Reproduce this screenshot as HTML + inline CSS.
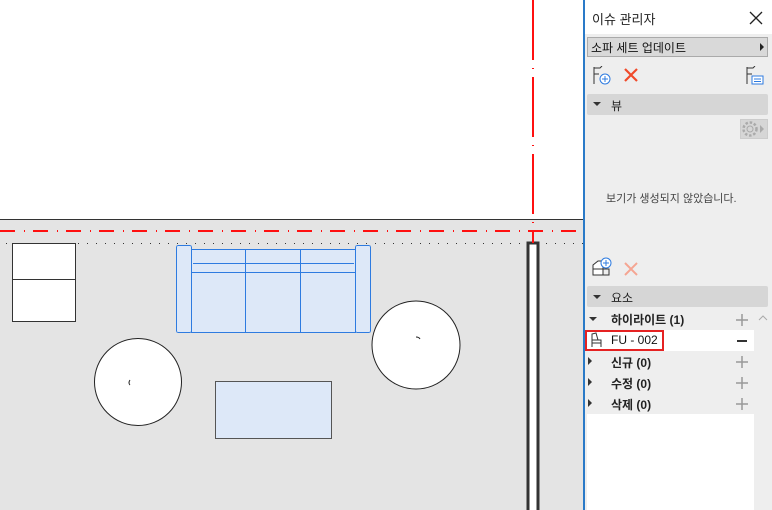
<!DOCTYPE html>
<html><head><meta charset="utf-8"><style>
*{margin:0;padding:0;box-sizing:border-box}
body{width:772px;height:510px;overflow:hidden;position:relative;background:#fff;font-family:"Liberation Sans","Noto Sans CJK KR",sans-serif;font-size:12px;color:#222}
.a{position:absolute}
.t{position:absolute;white-space:nowrap}
</style></head><body>
<svg class="a" style="left:0;top:0" width="584" height="510" shape-rendering="crispEdges">
<rect x="0" y="219" width="584" height="291" fill="#e4e4e4"/>
<line x1="0" y1="219.5" x2="584" y2="219.5" stroke="#333" stroke-width="1"/>
<line x1="6" y1="243.5" x2="584" y2="243.5" stroke="#333" stroke-width="1" stroke-dasharray="1,8"/>
<rect x="528" y="243" width="10" height="270" fill="#fff" stroke="#333" stroke-width="3"/>
<rect x="12.5" y="243.5" width="63" height="78" fill="#fff" stroke="#333"/>
<line x1="12" y1="279.5" x2="76" y2="279.5" stroke="#333"/>
<g stroke="#2e7be0" fill="#dde8f8" stroke-width="1">
<rect x="176.5" y="245.5" width="15" height="87" rx="2"/>
<rect x="355.5" y="245.5" width="15" height="87" rx="2"/>
<rect x="191.5" y="249.5" width="164" height="83"/>
<line x1="191" y1="272.5" x2="356" y2="272.5"/>
<line x1="193" y1="263.5" x2="354" y2="263.5"/>
<line x1="245.5" y1="249" x2="245.5" y2="333"/>
<line x1="300.5" y1="249" x2="300.5" y2="333"/>
<rect x="215.5" y="381.5" width="116" height="57" stroke="#555"/>
</g>
</svg>
<div class="a" style="left:0;top:230px;width:583px;height:2px;background:repeating-linear-gradient(90deg,#ff1010 0 15px,transparent 15px 24px,#ff1010 24px 25px,transparent 25px 33px)"></div>
<div class="a" style="left:532px;top:0;width:2px;height:243px;background:repeating-linear-gradient(180deg,#ff1010 0 60px,transparent 60px 68px,#ff1010 68px 69px,transparent 69px 77px)"></div>
<svg class="a" style="left:0;top:0" width="584" height="510">
<circle cx="138" cy="382" r="43.5" fill="#fff" stroke="#222"/>
<circle cx="416" cy="345" r="44" fill="#fff" stroke="#222"/>
<path d="M130 380 q-2 3 0 5" stroke="#222" fill="none"/>
<path d="M416 337 q3 0 4 2" stroke="#222" fill="none"/>
</svg>
<div class="a" style="left:583px;top:0;width:189px;height:510px;background:#eee;border-left:2px solid #2a7ac8"></div>
<div class="a" style="left:585px;top:0;width:187px;height:34px;background:#fff"></div>
<div class="t" style="left:592px;top:9px;font-size:13px">이슈 관리자</div>
<svg class="a" style="left:749px;top:11px" width="14" height="14"><path d="M1 1L13 13M13 1L1 13" stroke="#222" stroke-width="1.3"/></svg>
<div class="a" style="left:587px;top:37px;width:181px;height:20px;background:#d9d9d9;border:1px solid #aaa"></div>
<div class="t" style="left:591px;top:39px;font-size:12px;color:#111">소파 세트 업데이트</div>
<div class="a" style="left:760px;top:43px;border-left:4px solid #222;border-top:4px solid transparent;border-bottom:4px solid transparent"></div>
<svg class="a" style="left:592px;top:66px" width="20" height="20"><path d="M2 1V18M2 2H8L10 0M2 8H7" stroke="#333" fill="none"/><circle cx="13" cy="13" r="5" fill="#fff" stroke="#2e7be0"/><path d="M10 13H16M13 10V16" stroke="#2e7be0"/></svg>
<svg class="a" style="left:624px;top:68px" width="14" height="14"><path d="M1 1L13 13M13 1L1 13" stroke="#f04a2a" stroke-width="2.2"/></svg>
<svg class="a" style="left:745px;top:66px" width="20" height="20"><path d="M2 1V18M2 2H8L10 0M2 8H7" stroke="#333" fill="none"/><rect x="7" y="10" width="11" height="8" fill="#fff" stroke="#2e7be0"/><path d="M9 13H16M9 15.5H16" stroke="#2e7be0"/></svg>
<div class="a" style="left:587px;top:94px;width:181px;height:21px;background:#d6d6d6;border-radius:2px"></div>
<div class="a" style="left:593px;top:102px;border-top:4px solid #333;border-left:4px solid transparent;border-right:4px solid transparent"></div>
<div class="t" style="left:611px;top:97px;font-size:12px">뷰</div>
<div class="a" style="left:740px;top:119px;width:28px;height:20px;background:#d6d6d6;border:1px solid #ccc"></div>
<svg class="a" style="left:741px;top:120px" width="26" height="18"><circle cx="9" cy="9" r="6.5" fill="none" stroke="#aaa" stroke-width="2.5" stroke-dasharray="2.5,1.8"/><circle cx="9" cy="9" r="3" fill="none" stroke="#aaa"/><path d="M19 5L23 9L19 13Z" fill="#aaa"/></svg>
<div class="t" style="left:606px;top:190px;font-size:11px;color:#444">보기가 생성되지 않았습니다.</div>
<svg class="a" style="left:591px;top:257px" width="22" height="20"><path d="M2 18V8L7 4H12V18Z" fill="#fff" stroke="#333"/><path d="M2 12H18V18H2" fill="none" stroke="#333"/><circle cx="15" cy="6" r="5" fill="#fff" stroke="#2e7be0"/><path d="M12 6H18M15 3V9" stroke="#2e7be0"/></svg>
<svg class="a" style="left:624px;top:262px" width="14" height="14"><path d="M1 1L13 13M13 1L1 13" stroke="#f5a592" stroke-width="2"/></svg>
<div class="a" style="left:587px;top:286px;width:181px;height:21px;background:#d6d6d6;border-radius:2px"></div>
<div class="a" style="left:593px;top:295px;border-top:4px solid #333;border-left:4px solid transparent;border-right:4px solid transparent"></div>
<div class="t" style="left:611px;top:289px;font-size:12px">요소</div>
<div class="a" style="left:587px;top:414px;width:167px;height:96px;background:#fff"></div>
<div class="a" style="left:587px;top:330px;width:167px;height:21px;background:#fff"></div>
<div class="a" style="left:585px;top:330px;width:79px;height:21px;border:2px solid #e52222"></div>
<svg class="a" style="left:589px;top:332px" width="14" height="17"><path d="M3 15V2L7 1L9 8H12V15M3 8H12M3 11H12" stroke="#333" fill="none"/></svg>
<div class="t" style="left:611px;top:333px;font-size:12px;color:#111">FU - 002</div>
<div class="a" style="left:737px;top:340px;width:10px;height:2px;background:#333"></div>
<div class="a" style="left:589px;top:317px;border-top:4px solid #333;border-left:4px solid transparent;border-right:4px solid transparent"></div>
<div class="t" style="left:611px;top:311px;font-weight:bold">하이라이트 (1)</div>
<div class="t" style="left:611px;top:354px;font-weight:bold">신규 (0)</div>
<div class="t" style="left:611px;top:375px;font-weight:bold">수정 (0)</div>
<div class="t" style="left:611px;top:396px;font-weight:bold">삭제 (0)</div>
<div class="a" style="left:588px;top:357px;border-left:4px solid #333;border-top:4px solid transparent;border-bottom:4px solid transparent"></div>
<div class="a" style="left:588px;top:378px;border-left:4px solid #333;border-top:4px solid transparent;border-bottom:4px solid transparent"></div>
<div class="a" style="left:588px;top:399px;border-left:4px solid #333;border-top:4px solid transparent;border-bottom:4px solid transparent"></div>
<svg class="a" style="left:735px;top:313px" width="14" height="100"><g stroke="#999" stroke-width="1.5"><path d="M1 7H13M7 1V13"/><path d="M1 49H13M7 43V55"/><path d="M1 70H13M7 64V76"/><path d="M1 91H13M7 85V97"/></g></svg>
<svg class="a" style="left:757px;top:314px" width="12" height="8"><path d="M2 6L6 2L10 6" stroke="#aaa" fill="none"/></svg>
</body></html>
